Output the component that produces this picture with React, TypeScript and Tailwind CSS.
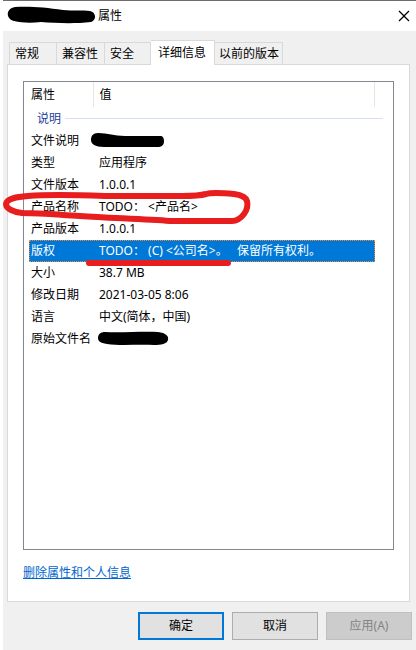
import { VscChromeClose } from 'react-icons/vsc'
import clsx from 'clsx'

const tabs = [
  { label: '常规', width: 'w-12 pl-[5px]' },
  { label: '兼容性', width: 'w-12 pl-[5px]' },
  { label: '安全', width: 'w-[46px] pl-[5px]' },
  { label: '详细信息', width: 'w-16 pl-[7px]', active: true },
  { label: '以前的版本', width: 'w-[68px] pl-1' },
]

const properties = [
  { name: '文件说明', value: '' },
  { name: '类型', value: '应用程序' },
  { name: '文件版本', value: '1.0.0.1' },
  { name: '产品名称', value: 'TODO： <产品名>' },
  { name: '产品版本', value: '1.0.0.1' },
  { name: '版权', value: 'TODO： (C) <公司名>。   保留所有权利。', selected: true },
  { name: '大小', value: '38.7 MB' },
  { name: '修改日期', value: '2021-03-05 8:06' },
  { name: '语言', value: '中文(简体，中国)' },
  { name: '原始文件名', value: '' },
]

const TitleBar = () => (
  <header className="flex items-center h-[31px] bg-white border-t border-[#6e6b6e] pl-1">
    <svg className="w-[88px] h-5" viewBox="0 0 88 20" aria-hidden="true">
      <path
        d="M8 1C20 0 38 1 56 4C66 5 76 4 83 5C89 6 90 14 84 16C67 18 48 17 34 16C25 17 15 17 7 15C-1 13-2 3 8 1Z"
        fill="#000"
      />
    </svg>
    <h1 className="ml-[3px]">属性</h1>
    <button type="button" aria-label="关闭" className="ml-auto mr-1">
      <VscChromeClose size={16} />
    </button>
  </header>
)

const TabList = () => (
  <div role="tablist" className="flex items-end h-[25px] pl-0.5 -mb-px">
    {tabs.map(({ label, width, active }) => (
      <button
        key={label}
        type="button"
        role="tab"
        aria-selected={!!active}
        className={clsx(
          'text-left whitespace-nowrap border-[#d9d9d9] border-t border-r first:border-l',
          width,
          active ? 'h-[25px] bg-white relative' : 'h-[23px] bg-[#f0f0f0]'
        )}
      >
        {label}
      </button>
    ))}
  </div>
)

const PropertyTable = () => (
  <table className="w-full table-fixed border-collapse text-left">
    <thead>
      <tr className="h-[25px]">
        <th className="w-16 p-0 pl-0.5 font-normal border-r border-[#e5e5e5]">
          属性
        </th>
        <th className="p-0 pl-1.5 font-normal border-r border-[#e5e5e5]">值</th>
      </tr>
    </thead>
    <tbody>
      <tr className="h-[23px]">
        <th colSpan={2} className="p-0 pl-2 font-normal text-[#1e3c9b]">
          <div className="flex items-center gap-1 -mr-2">
            说明
            <span className="flex-1 h-px bg-[#d5e0ec]" />
          </div>
        </th>
      </tr>
      {properties.map(({ name, value, selected }) => (
        <tr
          key={name}
          className={clsx(
            'h-[22px]',
            selected &&
              'bg-[#0078d7] text-white outline-1 outline-dotted -outline-offset-1 outline-[#ff8728]'
          )}
        >
          <th className="p-0 pl-0.5 font-normal whitespace-nowrap">{name}</th>
          <td className="p-0 pl-1.5 whitespace-pre">{value}</td>
        </tr>
      ))}
    </tbody>
  </table>
)

// Pen marks drawn over the list
const Markup = () => (
  <svg
    className="absolute top-0 left-0 pointer-events-none"
    width="260"
    height="360"
    viewBox="0 0 260 360"
    fill="none"
    stroke="#e81e1e"
    strokeLinecap="round"
    strokeLinejoin="round"
    aria-hidden="true"
  >
    <path
      d="M98 133C108 133 114 136 125 136L160 136C163 136 164 138 164 141C164 145 162 147 157 147L104 147C95 147 91 144 91 140C91 136 93 133 98 133Z"
      fill="#000"
      stroke="none"
    />
    <path
      d="M105 332C121 333 143 331 158 332C166 333 169 336 168 340C167 344 161 345 154 345C139 344 121 346 107 344C100 343 98 341 98 338C98 334 101 332 105 332Z"
      fill="#000"
      stroke="none"
    />
    <path
      d="M22 213C46 213 60 215 80 216C110 218 145 219 170 221L232 221C237 221 241 218 244 214C247 210 248 205 247 201C246 197 241 195 234 194C224 193 212 192 206 194C199 196 192 196 182 196L105 196C80 195 50 194 28 196C17 197 7 198 6 204C6 209 14 212 22 213"
      strokeWidth="6"
    />
    <path d="M89 263L228 263" strokeWidth="6" />
  </svg>
)

const Footer = () => (
  <footer className="flex justify-end gap-2 mt-2.5 pr-1">
    <button
      type="button"
      className="w-[86px] h-7 bg-[#e1e1e1] border-2 border-[#0078d7]"
    >
      确定
    </button>
    <button
      type="button"
      className="w-[86px] h-7 bg-[#e1e1e1] border border-[#adadad]"
    >
      取消
    </button>
    <button
      type="button"
      disabled
      className="w-[86px] h-7 bg-[#cccccc] border border-[#bfbfbf] text-[#838383]"
    >
      应用(A)
    </button>
  </footer>
)

export default function App() {
  return (
    <div
      lang="zh-CN"
      className="relative min-h-screen bg-white pl-[3px] flex flex-col text-xs text-black font-['Noto_Sans','Noto_Sans_CJK_SC',sans-serif]"
    >
      <TitleBar />
      <div className="flex-1 flex flex-col bg-[#f0f0f0] pt-[9px] pb-2.5">
        <main className="flex-1 flex flex-col ml-1 mr-1.5">
          <TabList />
          <section className="flex-1 flex flex-col bg-white border border-[#d9d9d9] px-[15px] pt-4 pb-5">
            <div className="flex-1 border border-[#828790] pl-[5px] pr-[18px]">
              <PropertyTable />
            </div>
            <a
              href="#remove"
              className="self-start mt-[15px] text-[#0066cc] underline"
            >
              删除属性和个人信息
            </a>
          </section>
        </main>
        <Footer />
      </div>
      <Markup />
    </div>
  )
}
